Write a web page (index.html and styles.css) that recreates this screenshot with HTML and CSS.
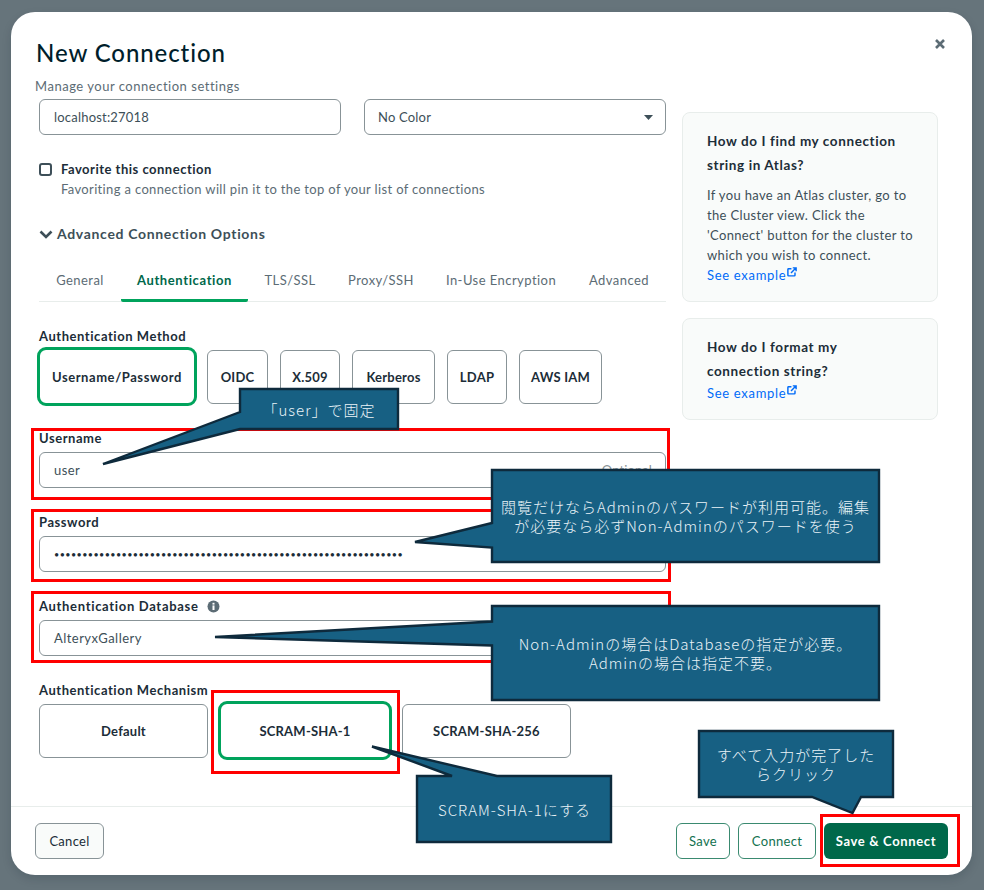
FILE: index.html
```html
<!DOCTYPE html>
<html lang="ja">
<head>
<meta charset="utf-8">
<title>New Connection</title>
<link rel="stylesheet" href="styles.css">
</head>
<body>
<div class="modal">
  <header class="head">
    <h1 class="title">New Connection</h1>
    <p class="subtitle">Manage your connection settings</p>
  </header>
  <svg class="close" viewBox="0 0 12 12" width="12" height="12"><path d="M2 2l8 8M10 2l-8 8" stroke="#5c6c75" stroke-width="2.6" fill="none"/></svg>
  <main class="content">
    <section class="form">
      <div class="host-row">
        <div class="input">localhost:27018</div>
        <div class="input select">No Color
          <svg class="caret" width="9" height="5" viewBox="0 0 9 5"><path d="M0 0h9L4.5 5z" fill="#3d4f58"/></svg>
        </div>
      </div>
      <div class="favorite">
        <span class="checkbox"></span>
        <div>
          <div class="strong">Favorite this connection</div>
          <div class="muted">Favoriting a connection will pin it to the top of your list of connections</div>
        </div>
      </div>
      <div class="advanced">
        <svg width="14" height="9" viewBox="0 0 14 9"><path d="M1.5 1.5L7 7l5.500-5.500" stroke="#3d4f58" stroke-width="2.6" fill="none"/></svg>
        Advanced Connection Options
      </div>
      <nav class="tabs">
        <span class="tab t-general">General</span>
        <span class="tab active">Authentication</span>
        <span class="tab t-tls">TLS/SSL</span>
        <span class="tab t-proxy">Proxy/SSH</span>
        <span class="tab t-enc">In-Use Encryption</span>
        <span class="tab t-adv">Advanced</span>
      </nav>
      <div class="label method-label">Authentication Method</div>
      <div class="choices">
        <span class="choice sel m-user">Username/Password</span>
        <span class="choice m-oidc">OIDC</span>
        <span class="choice m-x">X.509</span>
        <span class="choice m-krb">Kerberos</span>
        <span class="choice m-ldap">LDAP</span>
        <span class="choice m-aws">AWS IAM</span>
      </div>
      <div class="field first">
        <div class="label">Username</div>
        <div class="input wide">user<span class="optional">Optional</span></div>
      </div>
      <div class="field">
        <div class="label">Password</div>
        <div class="input wide dots">••••••••••••••••••••••••••••••••••••••••••••••••••••••••••••••</div>
      </div>
      <div class="field">
        <div class="label label-db">Authentication Database
          <svg class="info" width="13" height="13" viewBox="0 0 13 13"><circle cx="6.5" cy="6.5" r="6" fill="#5c6c75"/><rect x="5.5" y="5.4" width="2" height="4.6" fill="#fff"/><rect x="5.5" y="2.8" width="2" height="1.8" fill="#fff"/></svg>
        </div>
        <div class="input wide">AlteryxGallery</div>
      </div>
      <div class="field">
        <div class="label">Authentication Mechanism</div>
        <div class="choices mech">
          <span class="choice c-def">Default</span>
          <span class="choice sel c-sha1">SCRAM-SHA-1</span>
          <span class="choice c-sha256">SCRAM-SHA-256</span>
        </div>
      </div>
    </section>
    <aside class="help">
      <div class="card">
        <div class="card-title">How do I find my connection string in Atlas?</div>
        <p class="card-text">If you have an Atlas cluster, go to the Cluster view. Click the 'Connect' button for the cluster to which you wish to connect.</p>
        <span class="link">See example<svg width="10" height="10" viewBox="0 0 9 9"><path d="M4 1.6H1.400a.6.6 0 0 0-.6.6v5.200c0 .3.3.6.6.6h5.200c.3 0 .6-.3.6-.6V5M3.600 5.400L8 1M5.200.8h3v3" stroke="#016bf8" stroke-width="1.3" fill="none"/></svg></span>
      </div>
      <div class="card">
        <div class="card-title">How do I format my connection string?</div>
        <span class="link">See example<svg width="10" height="10" viewBox="0 0 9 9"><path d="M4 1.6H1.400a.6.6 0 0 0-.6.6v5.200c0 .3.3.6.6.6h5.200c.3 0 .6-.3.6-.6V5M3.600 5.400L8 1M5.200.8h3v3" stroke="#016bf8" stroke-width="1.3" fill="none"/></svg></span>
      </div>
    </aside>
  </main>
  <footer class="foot">
    <span class="btn cancel">Cancel</span>
    <span class="foot-right">
      <span class="btn outline">Save</span>
      <span class="btn outline">Connect</span>
      <span class="btn primary">Save &amp; Connect</span>
    </span>
  </footer>
</div>

<div class="red r-user"></div>
<div class="red r-pass"></div>
<div class="red r-db"></div>
<div class="red r-sha"></div>
<div class="red r-save"></div>

<svg class="shapes" width="984" height="890" viewBox="0 0 984 890">
  <g fill="#176083" stroke="#0e2a3c" stroke-width="2.4" stroke-linejoin="miter">
    <path d="M240 389H398V429H240L103 464 240 412z"/>
    <path d="M492 470H879V562H492V547.500L415 542 492 523z"/>
    <path d="M492 606H879V700H492V645.500L215 637 492 621.500z"/>
    <path d="M417 776H452L372 746.500 497 776H611V842H417z"/>
    <path d="M699 731H893V797H861L852.500 813 812 797H699z"/>
  </g>
</svg>
<div class="note n-user">「user」で固定</div>
<div class="note n-pass">閲覧だけならAdminのパスワードが利用可能。編集が必要なら必ずNon-Adminのパスワードを使う</div>
<div class="note n-db">Non-Adminの場合はDatabaseの指定が必要。<br>Adminの場合は指定不要。</div>
<div class="note n-sha">SCRAM-SHA-1にする</div>
<div class="note n-save">すべて入力が完了したらクリック</div>
</body>
</html>
```
FILE: styles.css
```css
* { box-sizing: border-box; }
html, body { height: 100%; }
body {
  margin: 0;
  width: 984px;
  height: 890px;
  overflow: hidden;
  position: relative;
  background: #66747b;
  font-family: "Lato", "Noto Sans", sans-serif;
  font-size: 13px;
  color: #1c2d38;
  padding: 12px 12px 15px 11px;
}
.modal {
  position: relative;
  height: 863px;
  background: #fff;
  border-radius: 24px;
  display: flex;
  flex-direction: column;
  box-shadow: 0 4px 10px rgba(0, 30, 43, .15);
}
.head { padding: 25px 25px 0; }
.title {
  margin: 0;
  font-size: 24px;
  line-height: 32px;
  font-weight: 500;
  color: #001e2b;
  letter-spacing: .9px;
}
.subtitle {
  margin: 7px 0 3px -1px;
  line-height: 20px;
  font-size: 13px;
  color: #5c6c75;
  letter-spacing: .52px;
}
.close { position: absolute; top: 26px; left: 923px; }
.content {
  flex: 1;
  display: flex;
  gap: 16px;
  padding: 0 34px 0 28px;
}
.form { width: 627px; }
.help { width: 256px; margin-top: 13px; display: flex; flex-direction: column; gap: 16px; }
.host-row { display: flex; gap: 23px; }
.input {
  position: relative;
  width: 302px;
  height: 36px;
  border: 1px solid #889397;
  border-radius: 6px;
  padding: 0 14px;
  display: flex;
  align-items: center;
  color: #3d4f58;
  letter-spacing: .2px;
}
.wide { width: 627px; letter-spacing: .46px; }
.select { padding-left: 13px; }
.caret { position: absolute; right: 12px; top: 15px; }
.dots { color: #1c2d38; font-size: 9px; letter-spacing: .41px; }
.optional { position: absolute; right: 13px; color: #889397; letter-spacing: .1px; }
.favorite { display: flex; gap: 9px; margin-top: 24px; }
.checkbox {
  width: 13px;
  height: 13px;
  margin-top: 4px;
  border: 2px solid #3d4f58;
  border-radius: 3px;
  flex: none;
}
.strong { line-height: 20px; font-weight: 700; color: #1c2d38; letter-spacing: .5px; }
.muted { line-height: 20px; color: #5c6c75; letter-spacing: .35px; }
.advanced {
  margin-top: 25px;
  line-height: 20px;
  font-weight: 700;
  font-size: 14px;
  color: #3d4f58;
  display: flex;
  align-items: center;
  gap: 4px;
  letter-spacing: .67px;
}
.tabs {
  display: flex;
  height: 42px;
  margin-top: 16px;
  border-bottom: 1px solid #e8edeb;
}
.tab {
  height: 42px;
  line-height: 40px;
  color: #5c6c75;
  text-align: center;
  white-space: nowrap;
  letter-spacing: .45px;
}
.t-general { width: 82px; }
.t-tls { width: 84px; }
.t-proxy { width: 98px; }
.t-enc { width: 142px; }
.t-adv { width: 94px; }
.tab.active {
  width: 127px;
  color: #00684a;
  font-weight: 700;
  border-bottom: 3px solid #00a35c;
  border-radius: 2px;
  letter-spacing: .62px;
}
.label {
  line-height: 20px;
  font-weight: 700;
  color: #1c2d38;
  letter-spacing: .55px;
  display: flex;
  align-items: center;
  gap: 8px;
}
.label-db { letter-spacing: .68px; }
.method-label { margin-top: 24px; margin-bottom: 1px; }
.choices { display: flex; align-items: center; gap: 12px; height: 59px; }
.choice {
  height: 54px;
  border: 1px solid #889397;
  border-radius: 6px;
  font-weight: 700;
  color: #1c2d38;
  display: flex;
  align-items: center;
  justify-content: center;
  letter-spacing: .22px;
  white-space: nowrap;
}
.choice.sel { height: 59px; border: 3px solid #00a35c; border-radius: 9px; }
.m-user { width: 160px; margin-left: -2px; margin-right: -2px; letter-spacing: .57px; }
.m-oidc { width: 61px; }
.m-x { width: 60px; }
.m-krb { width: 83px; }
.m-ldap { width: 60px; }
.m-aws { width: 83px; }
.mech { gap: 10px; }
.c-def { width: 169px; }
.c-sha1 { width: 174px; }
.c-sha256 { width: 169px; }
.field { margin-top: 24px; }
.field.first { margin-top: 22px; }
.field .label { margin-bottom: 4px; }
.field .mech { margin-top: -3px; }
.card {
  background: #f9fbfa;
  border: 1px solid #e8edeb;
  border-radius: 8px;
  padding: 16px 24px;
  color: #3d4f58;
}
.card-title { max-width: 195px; line-height: 24px; font-weight: 700; color: #1c2d38; font-size: 13.500px; letter-spacing: .6px; }
.card-text { margin: 8px 0 0; line-height: 20px; letter-spacing: .35px; }
.link { display: flex; align-items: flex-start; line-height: 20px; color: #016bf8; gap: 1px; letter-spacing: .7px; }
.link svg { margin-top: 2px; }
.foot {
  height: 69px;
  border-top: 1px solid #e8edeb;
  padding: 16px 24px 0;
  display: flex;
  justify-content: space-between;
}
.foot-right { display: flex; gap: 8px; }
.btn {
  height: 36px;
  border-radius: 6px;
  display: flex;
  align-items: center;
  letter-spacing: .3px;
}
.cancel { width: 69px; justify-content: center; background: #f9fbfa; border: 1px solid #889397; color: #1c2d38; }
.outline { border: 1px solid #3a8a70; color: #13714f; justify-content: center; }
.outline:nth-child(1) { width: 54px; }
.outline:nth-child(2) { width: 78px; }
.primary { width: 124px; justify-content: center; background: #00684a; color: #fff; font-weight: 700; letter-spacing: .65px; }
.red { position: absolute; border: 3px solid #f00; }
.r-user { left: 31px; top: 428px; width: 639px; height: 72px; }
.r-pass { left: 31px; top: 509px; width: 640px; height: 73px; }
.r-db { left: 31px; top: 591px; width: 640px; height: 72px; }
.r-sha { left: 211px; top: 690px; width: 189px; height: 84px; }
.r-save { left: 820px; top: 814px; width: 140px; height: 53px; }
.shapes { position: absolute; left: 0; top: 0; }
.note {
  position: absolute;
  display: flex;
  align-items: center;
  justify-content: center;
  text-align: center;
  color: #eaf3f8;
  font-family: "Noto Sans CJK JP", "Noto Sans", sans-serif;
  font-weight: 300;
  font-size: 15px;
  letter-spacing: 1px;
  line-height: 19px;
  padding: 0 5px;
}
.n-user { left: 240px; top: 389px; width: 158px; height: 40px; }
.n-pass { left: 492px; top: 470px; width: 387px; height: 92px; }
.n-db { left: 492px; top: 606px; width: 387px; height: 94px; }
.n-sha { left: 417px; top: 776px; width: 195px; height: 66px; }
.n-save { left: 699px; top: 731px; width: 194px; height: 66px; padding: 0 14px; }
```
